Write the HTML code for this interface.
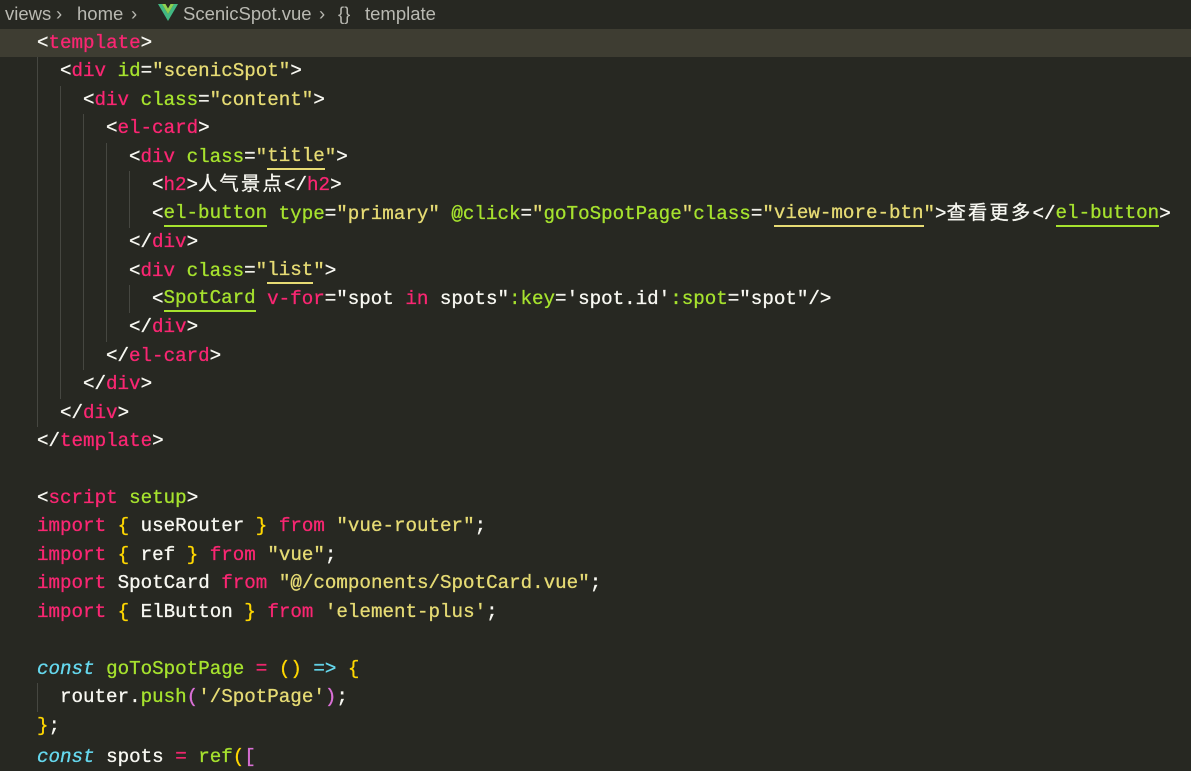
<!DOCTYPE html>
<html><head><meta charset="utf-8"><style>
body{margin:0;width:1191px;height:752px;overflow:hidden;background:#272822;}
.bc{position:absolute;left:0;top:0;height:28px;width:1191px;font-family:"Liberation Sans","Noto Sans CJK SC",sans-serif;font-size:18.5px;color:#b9b9b2;line-height:27px;white-space:nowrap}
.bc span{position:absolute;top:0}
.code{position:absolute;left:0;top:29px;width:1191px;font-family:"Liberation Mono","Noto Sans CJK SC",monospace;font-size:19.2px;color:#f8f8f2;-webkit-text-stroke:0.3px}
.l{height:28.45px;line-height:28.45px;padding-left:37px;white-space:pre;position:relative}
.cur{background:#3e3d32}
.g{display:inline-block;width:23px;height:28.45px;vertical-align:top;box-shadow:inset 1px 0 0 #464741}
.t{color:#f92672}.a{color:#a6e22e}.s{color:#e6db74}.y{color:#ffd700}.c{color:#66d9ef}.m{color:#da70d6}
.i{font-style:italic;color:#66d9ef}
.uy{border-bottom:2px solid #e6db74}.ug{border-bottom:2px solid #a6e22e}
.u{display:inline-block;line-height:24px;height:24px;vertical-align:top;margin-top:1px}
.cj{letter-spacing:2.3px}
</style></head><body>
<div class="bc"><span style="left:5px">views</span><span style="left:56px">›</span><span style="left:77px">home</span><span style="left:131px">›</span>
<svg style="position:absolute;left:158px;top:4px" width="20" height="17" viewBox="0 0 20 17"><path d="M0 0h4l6 10 6-10h4L10 17z" fill="#41b883"/><path d="M4 0h3.5l2.5 4.5 2.5-4.5H16l-6 10z" fill="#8fd14f"/></svg>
<span style="left:183px">ScenicSpot.vue</span><span style="left:319px">›</span><span style="left:338px">{}</span><span style="left:365px">template</span></div>
<div class="code">
<div class="l cur"><span>&lt;</span><span class="t">template</span>&gt;</div>
<div class="l"><span class="g"></span>&lt;<span class="t">div</span> <span class="a">id</span>=<span class="s">"scenicSpot"</span>&gt;</div>
<div class="l"><span class="g"></span><span class="g"></span>&lt;<span class="t">div</span> <span class="a">class</span>=<span class="s">"content"</span>&gt;</div>
<div class="l"><span class="g"></span><span class="g"></span><span class="g"></span>&lt;<span class="t">el-card</span>&gt;</div>
<div class="l"><span class="g"></span><span class="g"></span><span class="g"></span><span class="g"></span>&lt;<span class="t">div</span> <span class="a">class</span>=<span class="s">"<span class="u uy">title</span>"</span>&gt;</div>
<div class="l"><span class="g"></span><span class="g"></span><span class="g"></span><span class="g"></span><span class="g"></span>&lt;<span class="t">h2</span>&gt;<span class="cj">人气景点</span>&lt;/<span class="t">h2</span>&gt;</div>
<div class="l"><span class="g"></span><span class="g"></span><span class="g"></span><span class="g"></span><span class="g"></span>&lt;<span class="a u ug">el-button</span> <span class="a">type</span>=<span class="s">"primary"</span> <span class="a">@click</span>=<span class="s">"<span class="a">goToSpotPage</span>"</span><span class="a">class</span>=<span class="s">"<span class="u uy">view-more-btn</span>"</span>&gt;<span class="cj">查看更多</span>&lt;/<span class="a u ug">el-button</span>&gt;</div>
<div class="l"><span class="g"></span><span class="g"></span><span class="g"></span><span class="g"></span>&lt;/<span class="t">div</span>&gt;</div>
<div class="l"><span class="g"></span><span class="g"></span><span class="g"></span><span class="g"></span>&lt;<span class="t">div</span> <span class="a">class</span>=<span class="s">"<span class="u uy">list</span>"</span>&gt;</div>
<div class="l"><span class="g"></span><span class="g"></span><span class="g"></span><span class="g"></span><span class="g"></span>&lt;<span class="a u ug">SpotCard</span> <span class="t">v-for</span>=<span class="s" style="color:#f8f8f2">"spot <span class="t">in</span> spots"</span><span class="a">:key</span>=<span style="color:#f8f8f2">'spot.id'</span><span class="a">:spot</span>=<span>"spot"</span>/&gt;</div>
<div class="l"><span class="g"></span><span class="g"></span><span class="g"></span><span class="g"></span>&lt;/<span class="t">div</span>&gt;</div>
<div class="l"><span class="g"></span><span class="g"></span><span class="g"></span>&lt;/<span class="t">el-card</span>&gt;</div>
<div class="l"><span class="g"></span><span class="g"></span>&lt;/<span class="t">div</span>&gt;</div>
<div class="l"><span class="g"></span>&lt;/<span class="t">div</span>&gt;</div>
<div class="l">&lt;/<span class="t">template</span>&gt;</div>
<div class="l"> </div>
<div class="l">&lt;<span class="t">script</span> <span class="a">setup</span>&gt;</div>
<div class="l"><span class="t">import</span> <span class="y">{</span> useRouter <span class="y">}</span> <span class="t">from</span> <span class="s">"vue-router"</span>;</div>
<div class="l"><span class="t">import</span> <span class="y">{</span> ref <span class="y">}</span> <span class="t">from</span> <span class="s">"vue"</span>;</div>
<div class="l"><span class="t">import</span> SpotCard <span class="t">from</span> <span class="s">"@/components/SpotCard.vue"</span>;</div>
<div class="l"><span class="t">import</span> <span class="y">{</span> ElButton <span class="y">}</span> <span class="t">from</span> <span class="s">'element-plus'</span>;</div>
<div class="l"> </div>
<div class="l"><span class="i">const</span> <span class="a">goToSpotPage</span> <span class="t">=</span> <span class="y">()</span> <span class="c">=&gt;</span> <span class="y">{</span></div>
<div class="l"><span class="g"></span>router.<span class="a">push</span><span class="m">(</span><span class="s">'/SpotPage'</span><span class="m">)</span>;</div>
<div class="l"><span class="y">}</span>;</div>
<div class="l" style="padding-top:3px"><span class="i">const</span> spots <span class="t">=</span> <span class="a">ref</span><span class="y">(</span><span class="m">[</span></div>
</div>
</body></html>
